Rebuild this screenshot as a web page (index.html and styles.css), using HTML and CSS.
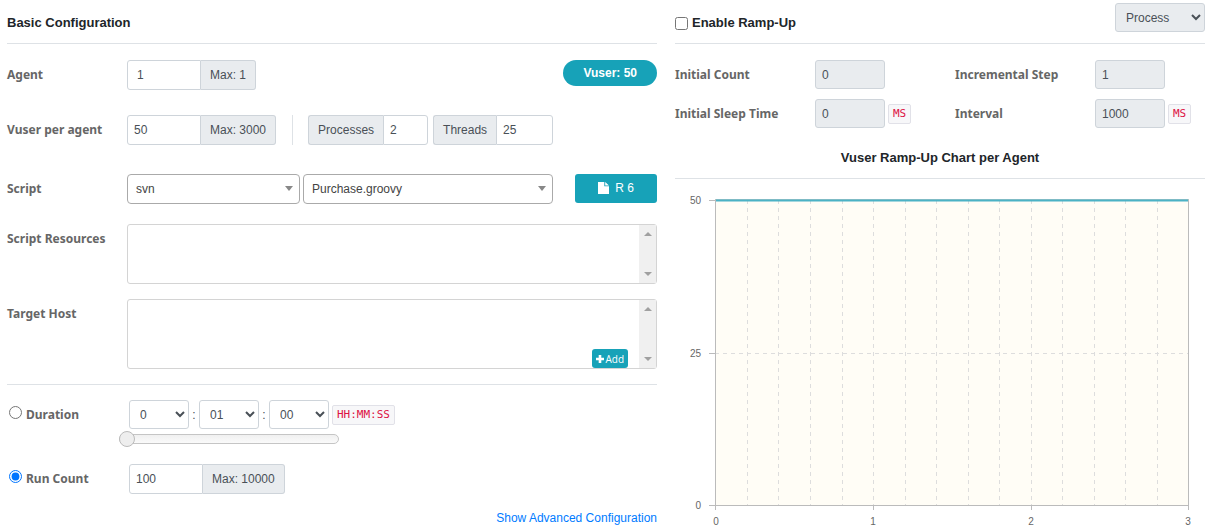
FILE: index.html
```html
<!DOCTYPE html>
<html lang="en">
<head>
<meta charset="utf-8">
<meta name="viewport" content="width=device-width, initial-scale=1">
<title>Test Configuration</title>
<link rel="stylesheet" href="styles.css">
</head>
<body>
<main class="config">
  <section class="basic">
    <header class="section-head"><h2 class="title">Basic Configuration</h2></header>

    <div class="row row-agent">
      <label class="label" for="agent">Agent</label>
      <div class="group"><input class="input indent" id="agent" value="1"><span class="addon">Max: 1</span></div>
      <span class="pill">Vuser: 50</span>
    </div>

    <div class="row row-vuser">
      <label class="label" for="vuser">Vuser per agent</label>
      <div class="group"><input class="input" id="vuser" value="50"><span class="addon">Max: 3000</span></div>
      <span class="divider"></span>
      <div class="group lead"><label class="addon" for="processes">Processes</label><input class="input short" id="processes" value="2"></div>
      <div class="group lead"><label class="addon" for="threads">Threads</label><input class="input medium" id="threads" value="25"></div>
    </div>

    <div class="row row-script">
      <label class="label" for="scm">Script</label>
      <div class="picker picker-scm"><select class="picker-select" id="scm"><option>svn</option></select></div>
      <div class="picker picker-file"><select class="picker-select" aria-label="Script file"><option>Purchase.groovy</option></select></div>
      <button class="btn revision" type="button">
        <svg class="icon-file" viewBox="0 0 11 12" aria-hidden="true"><path d="M0 0h6.300v4.200H11V12H0z M7.200 0L11 3.400H7.200z"/></svg>R 6
      </button>
    </div>

    <div class="row row-resources">
      <span class="label">Script Resources</span>
      <div class="box">
        <div class="box-body"></div>
        <div class="scroll"><span class="arrow up"></span><span class="arrow down"></span></div>
      </div>
    </div>

    <div class="row row-host">
      <span class="label">Target Host</span>
      <div class="box tall">
        <div class="box-body">
          <button class="btn add" type="button"><svg class="icon-plus" viewBox="0 0 8 8" aria-hidden="true"><path d="M2.700 0h2.600v2.700H8v2.600H5.300V8H2.700V5.300H0V2.700h2.700z"/></svg>Add</button>
        </div>
        <div class="scroll"><span class="arrow up"></span><span class="arrow down"></span></div>
      </div>
    </div>

    <div class="limits">
      <div class="row row-duration">
        <label class="choice"><input class="radio" type="radio" name="limit">Duration</label>
        <div class="duration">
          <div class="time">
            <select class="select" aria-label="Hours"><option>0</option></select><span class="colon">:</span>
            <select class="select" aria-label="Minutes"><option>01</option></select><span class="colon">:</span>
            <select class="select" aria-label="Seconds"><option>00</option></select>
            <code class="code">HH:MM:SS</code>
          </div>
          <input class="slider" type="range" min="0" max="100" value="0" aria-label="Duration">
        </div>
      </div>
      <div class="row row-count">
        <label class="choice"><input class="radio" type="radio" name="limit" checked>Run Count</label>
        <div class="group"><input class="input" aria-label="Run Count" value="100"><span class="addon">Max: 10000</span></div>
      </div>
    </div>
    <a class="advanced" href="#">Show Advanced Configuration</a>
  </section>

  <section class="ramp">
    <header class="section-head">
      <label class="title enable"><input class="checkbox" type="checkbox">Enable Ramp-Up</label>
      <select class="select mode" aria-label="Ramp-up type" disabled><option>Process</option></select>
    </header>
    <div class="ramp-grid">
      <div class="field"><label class="label wide" for="init-count">Initial Count</label><input class="input solo" id="init-count" value="0" disabled></div>
      <div class="field"><label class="label wide" for="step">Incremental Step</label><input class="input solo" id="step" value="1" disabled></div>
      <div class="field"><label class="label wide" for="sleep">Initial Sleep Time</label><input class="input solo" id="sleep" value="0" disabled><code class="code">MS</code></div>
      <div class="field"><label class="label wide" for="interval">Interval</label><input class="input solo" id="interval" value="1000" disabled><code class="code">MS</code></div>
    </div>
    <h3 class="title chart-title">Vuser Ramp-Up Chart per Agent</h3>
    <svg class="chart" viewBox="0 0 530 348" role="img" aria-label="Vuser ramp-up chart">
      <rect class="plot" x="40" y="21" width="473" height="305"/>
      <path class="grid" d="M72.500 21V326M103.500 21V326M135.500 21V326M167.500 21V326M198.500 21V326M230.500 21V326M261.500 21V326M293.500 21V326M324.500 21V326M356.500 21V326M387.500 21V326M419.500 21V326M450.500 21V326M482.500 21V326M40 174.500H513"/>
      <path class="axis" d="M40.500 21V331M513.500 20V331M34 21.500H40M34 174.500H40M34 326.500H513M198.500 326V331M356.500 326V331"/>
      <path class="series-shadow" d="M40 20.500H514"/>
      <path class="series" d="M41 21.500H513"/>
      <g class="tick end"><text x="26" y="25">50</text><text x="26" y="178">25</text><text x="26" y="330">0</text></g>
      <g class="tick mid"><text x="41" y="346">0</text><text x="198" y="346">1</text><text x="356" y="346">2</text><text x="513" y="346">3</text></g>
    </svg>
  </section>
</main>
</body>
</html>
```
FILE: styles.css
```css
* { box-sizing: border-box; }

body {
  margin: 0;
  background: #fff;
  color: #495057;
  font: 12px/18px "Liberation Sans", Arial, sans-serif;
}

input, select, button { font: inherit; color: inherit; margin: 0; }

.config {
  display: grid;
  grid-template-columns: 650fr 530fr;
  column-gap: 18px;
  padding: 0 1px 0 7px;
}

.section-head {
  display: flex;
  align-items: flex-start;
  justify-content: space-between;
  height: 44px;
  border-bottom: 1px solid #dee2e6;
}

.title {
  margin: 0;
  padding-top: 13px;
  color: #212529;
  font-size: 13px;
  font-weight: bold;
  line-height: 20px;
}

.row { display: flex; align-items: flex-start; }
.row-agent { margin-top: 16px; }
.row-vuser { margin-top: 25px; }
.row-script { margin-top: 29px; }
.row-resources { margin-top: 20px; }
.row-host { margin-top: 15px; }

.label, .choice {
  color: #666;
  font: bold 12px/18px "Noto Sans", sans-serif;
}
.label { flex: none; width: 120px; padding-top: 6px; }
.label.wide { width: 140px; }

.group { display: flex; height: 30px; }

.input {
  width: 74px;
  height: 30px;
  padding: 0 6px;
  border: 1px solid #ced4da;
  border-radius: 3px 0 0 3px;
  background: #fff;
}
.input.indent { padding-left: 9px; }
.input.short { width: 45px; }
.input.medium { width: 57px; }
.input.solo { width: 70px; height: 29px; border-radius: 3px; }
.input:disabled { background: #e9ecef; color: #495057; }

.addon {
  padding: 5px 9px;
  border: 1px solid #ced4da;
  border-left: 0;
  border-radius: 0 3px 3px 0;
  background: #e9ecef;
}
.lead .addon { border-left: 1px solid #ced4da; border-right: 0; border-radius: 3px 0 0 3px; }
.lead .input { border-radius: 0 3px 3px 0; }
.lead + .lead { margin-left: 5px; }

.divider { width: 1px; height: 30px; margin: 0 15px 0 16px; background: #dee2e6; }

.pill {
  margin-left: auto;
  padding: 4px 20px;
  border-radius: 13px;
  background: #17a2b8;
  color: #fff;
  font-weight: bold;
}

.picker { position: relative; height: 30px; }
.picker-scm { width: 173px; margin-right: 3px; }
.picker-file { width: 250px; }
.picker-select {
  appearance: none;
  width: 100%;
  height: 30px;
  padding: 0 8px;
  border: 1px solid #aaa;
  border-radius: 4px;
  background: #fff;
  color: #444;
}
.picker::after {
  content: "";
  position: absolute;
  top: 12px;
  right: 7px;
  border: 4px solid transparent;
  border-top: 5px solid #888;
  border-bottom: 0;
}

.btn {
  display: flex;
  align-items: center;
  justify-content: center;
  border: 0;
  border-radius: 3px;
  background: #17a2b8;
  color: #fff;
}
.btn svg { fill: currentColor; }
.revision { width: 82px; height: 29px; padding-bottom: 2px; margin-left: auto; gap: 6px; }
.icon-file { width: 11px; height: 12px; }
.add { height: 19px; padding: 0 4px; gap: 1px; font: 10px/16px "Open Sans", sans-serif; }
.icon-plus { width: 8px; height: 8px; }

.box {
  display: flex;
  flex: 1;
  height: 60px;
  border: 1px solid #d4d4d4;
  border-radius: 3px;
}
.box.tall { height: 70px; }
.box-body {
  display: flex;
  flex: 1;
  align-items: flex-end;
  justify-content: flex-end;
  padding-right: 11px;
}
.scroll {
  display: flex;
  flex-direction: column;
  align-items: center;
  justify-content: space-between;
  width: 17px;
  padding: 7px 0;
  background: #f0f0f0;
}
.arrow { border: 4px solid transparent; }
.up { border-top: 0; border-bottom-color: #a0a0a0; }
.down { border-bottom: 0; border-top-color: #a0a0a0; }

.limits { margin-top: 15px; padding-top: 15px; border-top: 1px solid #dee2e6; }
.choice { display: flex; flex: none; width: 122px; padding-top: 6px; }
.radio { width: 13px; height: 13px; margin: 0 4px 0 2px; }

.time { display: flex; align-items: center; }
.select {
  width: 60px;
  height: 29px;
  padding: 0 6px;
  border: 1px solid #ced4da;
  border-radius: 3px;
  background: #fff;
}
.colon { width: 10px; text-align: center; }

.code {
  margin-left: 3px;
  padding: 0 4px;
  border: 1px solid #e1e1e8;
  border-radius: 2px;
  background: #f7f7f9;
  color: #d14;
  font: 11px/18px "DejaVu Sans Mono", monospace;
}

.slider {
  appearance: none;
  display: block;
  width: 220px;
  height: 16px;
  margin: 2px 0 0 -10px;
  background: transparent;
}
.slider::-webkit-slider-runnable-track {
  height: 10px;
  border: 1px solid #c5c5c5;
  border-radius: 5px;
  background: linear-gradient(#f0f0f0, #fafafa);
}
.slider::-webkit-slider-thumb {
  appearance: none;
  width: 16px;
  height: 16px;
  margin: -4px 0 0 -1px;
  border: 1px solid #bbb;
  border-radius: 50%;
  background: #eee;
}
.row-count { margin-top: 17px; }

.advanced {
  display: block;
  margin-top: 15px;
  color: #007bff;
  text-align: right;
  text-decoration: none;
}

.enable { display: flex; }
.checkbox { width: 13px; height: 13px; margin: 4px 4px 0 0; }
.mode { width: 90px; margin-top: 3px; }
.mode:disabled { background: #e9ecef; color: #495057; opacity: 1; }

.ramp-grid {
  display: grid;
  grid-template-columns: 280fr 250fr;
  row-gap: 10px;
  margin-top: 16px;
}
.field { display: flex; align-items: flex-start; }
.field .code { margin-top: 5px; }

.chart-title {
  margin-top: 6px;
  padding: 14px 0 10px;
  border-bottom: 1px solid #dee2e6;
  text-align: center;
}

.chart { display: block; width: 100%; height: auto; }
.plot { fill: #fffdf6; }
.grid { fill: none; stroke: #ddd; stroke-dasharray: 4 4; }
.axis { fill: none; stroke: #bbb; }
.series-shadow { fill: none; stroke: #b5c5c5; }
.series { fill: none; stroke: #4bb2c5; stroke-width: 2; }
.tick { fill: #666; font: 10px "Liberation Sans", Arial, sans-serif; }
.end { text-anchor: end; }
.mid { text-anchor: middle; }
```
